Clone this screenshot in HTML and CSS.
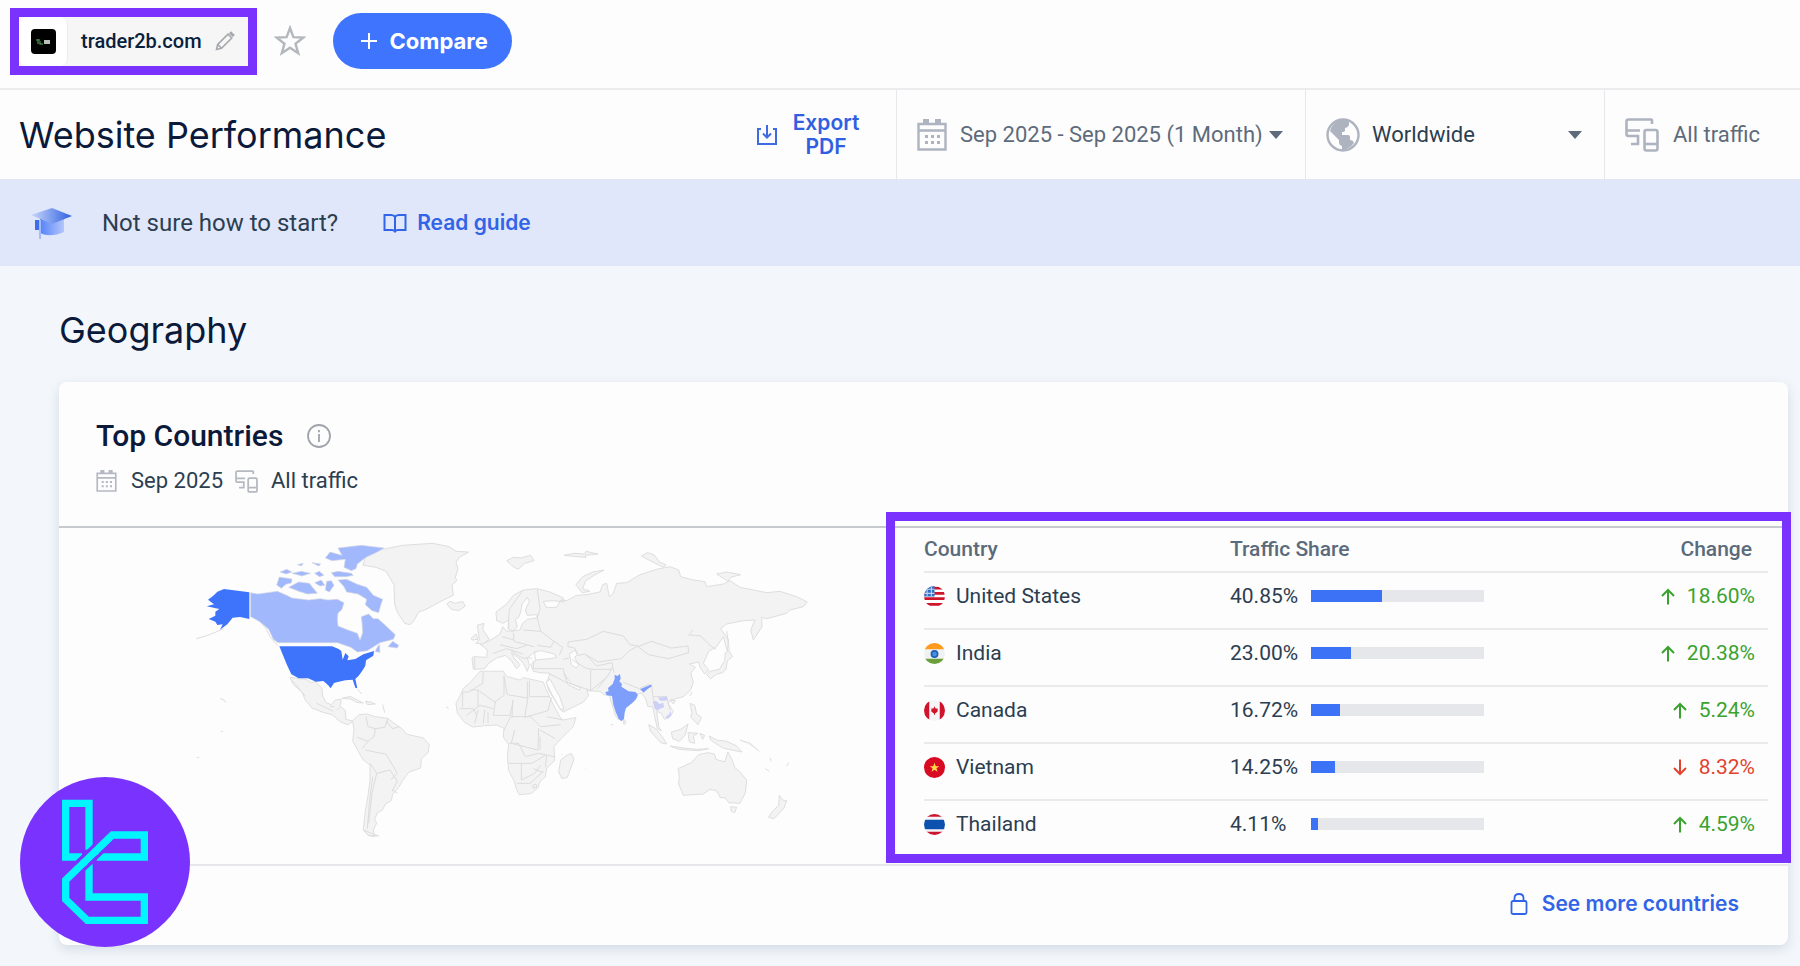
FILE: index.html
```html
<!DOCTYPE html>
<html lang="en">
<head>
<meta charset="utf-8">
<title>Website Performance - trader2b.com</title>
<link rel="stylesheet" href="styles.css">
</head>
<body>
<svg class="defs" aria-hidden="true">
  <symbol id="calendar" viewBox="0 0 30 32">
    <g fill="none" stroke="currentColor" stroke-width="2.400"><path d="M1.500 5h27v25.500h-27zM1.500 11.500h27"/><path d="M6 2.500h6M18 2.500h6" stroke-width="5"/></g>
    <path fill="currentColor" d="M8 16h3v3H8zM14 16h3v3h-3zM20 16h3v3h-3zM8 22h3v3H8zM14 22h3v3h-3zM20 22h3v3h-3z"/>
  </symbol>
  <symbol id="devices" viewBox="0 0 34 34">
    <g fill="none" stroke="currentColor" stroke-width="2.600"><path d="M27 6V2.500Q27 1.500 26 1.500H3.500Q1.500 1.500 1.500 3.500V16Q1.500 18 3.500 18H13V26M1.500 12.500H15M6 26H14.200"/><rect x="19.500" y="12" width="13" height="20.500" rx="2"/><path d="M19.500 26h13"/></g>
  </symbol>
  <symbol id="up" viewBox="0 0 14 17"><path d="M7 16.500V2M1 8l6-6 6 6" fill="none" stroke="currentColor" stroke-width="2"/></symbol>
  <symbol id="down" viewBox="0 0 14 17"><path d="M7 .5V15M1 9l6 6 6-6" fill="none" stroke="currentColor" stroke-width="2"/></symbol>
</svg>

<header class="topbar">
  <button class="site" type="button">
    <span class="site-logo"><svg width="25" height="25" viewBox="0 0 25 25"><rect width="25" height="25" rx="4" fill="#000"/><path d="M5 11h4M7 10v5M9 12v3h3" stroke="#3f7a3f" stroke-width="1.500" fill="none"/><path d="M13 11h6v4h-6z" fill="#b9c4b9"/></svg></span>
    <span class="site-name">trader2b.com</span>
    <svg width="20" height="20" viewBox="0 0 20 20" fill="none" stroke="#a5a8ad" stroke-width="1.600"><path d="M1.500 18.500l1.200-5L13 3.200l3.800 3.800L6.500 17.300zM2.700 13.500l3.800 3.800"/><path d="M15 1.200l3.800 3.800" stroke-width="3"/></svg>
  </button>
  <button class="star" type="button" aria-label="Add to favourites"><svg width="32" height="32" viewBox="0 0 32 32"><path d="M16 3l3.400 9.200 9.800.4-7.700 6.100 2.700 9.500-8.200-5.500-8.200 5.500 2.700-9.500-7.700-6.100 9.800-.4z" fill="none" stroke="#b4b7bc" stroke-width="2.400"/></svg></button>
  <button class="compare" type="button"><svg width="16" height="16" viewBox="0 0 16 16"><path d="M8 0v16M0 8h16" stroke="#fff" stroke-width="2"/></svg>Compare</button>
</header>

<div class="filters">
  <h1>Website Performance</h1>
  <button class="export" type="button">
    <svg width="22" height="22" viewBox="0 0 22 22" fill="none" stroke="#3e6be0" stroke-width="2"><path d="M5 5H2v15h18V5h-3M11 1v12M7 9.500l4 4 4-4"/></svg>
    <span>Export PDF</span>
  </button>
  <label class="filter date">
    <svg width="30" height="32"><use href="#calendar"/></svg>
    <select aria-label="Date range"><option>Sep 2025 - Sep 2025 (1 Month)</option></select>
    <svg class="caret" width="14" height="8" viewBox="0 0 14 8"><path d="M0 0h14L7 8z"/></svg>
  </label>
  <label class="filter region">
    <svg width="34" height="34" viewBox="0 0 34 34"><circle cx="17" cy="17" r="15.500" fill="#fdfdfe" stroke="#adb3bf" stroke-width="2.400"/><path fill="#adb3bf" d="M12 2.500Q18 0 23 3v3q0 3-4 4v2q0 2-3 2v3h6q2 0 2 2v3q3 0 4 3Q23 32 16 32v-4q-3-1-3-4v-2L4 13Q6 6 12 2.500z"/></svg>
    <select aria-label="Country"><option>Worldwide</option></select>
    <svg class="caret" width="14" height="8" viewBox="0 0 14 8"><path d="M0 0h14L7 8z"/></svg>
  </label>
  <div class="filter traffic"><svg width="34" height="34"><use href="#devices"/></svg><span>All traffic</span></div>
</div>

<div class="banner">
  <svg width="42" height="32" viewBox="0 0 42 32">
    <defs><linearGradient id="cap"><stop offset="0" stop-color="#c9d6fb"/><stop offset="1" stop-color="#2f62e0"/></linearGradient><linearGradient id="base"><stop offset="0" stop-color="#5583f8"/><stop offset="1" stop-color="#b3c6fb"/></linearGradient></defs>
    <path d="M9 12v14q10 5 24-1V12z" fill="url(#base)"/><path d="M0 8L21 1l20 8-20 8z" fill="url(#cap)"/><path d="M6 13v10" stroke="#3d6deb" stroke-width="4"/><path d="M9 13v19" stroke="#a5bcf8" stroke-width="2"/>
  </svg>
  <span>Not sure how to start?</span>
  <a class="link guide" href="#guide"><svg width="24" height="20" viewBox="0 0 24 20" fill="none" stroke="currentColor" stroke-width="2"><path d="M12 4Q11 2 8 2H1.500v15H9q2 0 3 1.500Q13 17 15 17h7.500V2H16q-3 0-4 2zv14"/></svg>Read guide</a>
</div>

<main>
  <h2>Geography</h2>
  <section class="card">
    <div class="card-head">
      <h3>Top Countries <svg width="24" height="24" viewBox="0 0 24 24" fill="none" stroke="#a0a4aa" stroke-width="1.800"><circle cx="12" cy="12" r="11"/><path d="M12 10v8M12 6v2.200"/></svg></h3>
      <p><svg width="21" height="22"><use href="#calendar"/></svg><span>Sep 2025</span><svg class="dev" width="23" height="23"><use href="#devices"/></svg><span>All traffic</span></p>
    </div>
    <div class="card-body">
      <div class="map">
        <svg viewBox="-363 -6 2481 1008" role="img" aria-label="Traffic by country on a world map">
          <g class="land">
            <path d="M548 105l10-25 40-20 70-14 90-6 50 10 20 14 38 2-28 16-10 14 6 20-8 26 4 10-14 14 4 30-22 10-60 32-22 8-14 26-12 12-16-4-20-30-10-26-2-60-24-40-30-12z"/>
            <path d="M800 222l10-8 16 6 22-6 8 14-20 14-22-4z"/>
            <path d="M330 442l48 6 16 10 12-4 20 22 2 22 10 20 16 6 12-14 18-2-4 20 16 14 2 26 22 6-16 10-22-8-26-22-30-8-30-12-20-24-10-24-26-22z"/>
            <path d="M334 450l14 14 16 20 12 14M410 520l50 24M450 530h14M470 540l10-8" fill="none"/>
            <path d="M486 505l24-6 28 14 12 6-20-2-18-10zM556 514l16 2 14 6-24 2zM532 478l14 14M608 524l6 24"/>
            <path transform="translate(0 46) scale(1 .92)" d="M518 572l20-20 24-2 20 8 40 6 20 16 24 18 14 18 50 12 18 22-4 26-20 20-2 30-36 14-20 30-10 20-18 22-4 20-18 12-8 18-16 10-8 22 6 12-10 22 4 22-20-4-14-20 6-60 8-50 6-50 0-50-20-16-16-30-16-32 4-36z"/>
            <path d="M550 900l20 8 26 10-30-2z"/>
            <path class="borders" d="M558 560l6 30 22 6 28-4 10-26M586 596l-4 24-18 14-32-12M564 634l-18 22M556 660l28 6 34 6 20 34 14 24-20 20M570 700l20 30 40-10 22 34-16 30M578 740l-10 80-6 76M590 730l-14 60-10 90M618 572l20 24 20-6M638 780l14 10"/>
            <path d="M120 506l12 4 6 8M122 604h6M50 682h8M798 530l8 6" fill="none"/>
            <path d="M48 326l30-8 30-12 22-10" fill="none"/>
            <path d="M228 268l14 8 16 20 12 24 22 26" fill="none"/>
          </g>
          <g class="us">
            <path d="M132 177l76 10v80l-28-6-22 2-16 20-22 16 8-16-16 2-6-10-20-8 20-10v-12l12-8-38-8 22-6-18-14 16-12 12-12z"/>
            <path d="M298 349h158l20 8 8 6 4 26 8-20 10 10-4 12 24-4 24-14 32-10-2 14-22 14-2 16-8 14-12 16-10 10 6 28-6-2-8-24-22 2-26 6-8 2-10 16-8-10-14-12-22 2-24-10-28 0-22-12-14-30z"/>
          </g>
          <g class="ca">
            <path d="M212 188l20 4 30-4 30-4 28 12 16 8 50 6 34-4 24 4 28-2 20 10-6 20-12 12-2 16 2 22 30 12 28 10 8 20 8-22-2-30-2-18 22-8 14 14 14 0 20 18 32 30-6 14-40 10-38 24-30 4-20-14-40-14H294l-14-10-14-30-28-24-26-14z"/>
            <path d="M436 84l14-18 36 10-12-22 70-8 68 8-20 12-34 16-26 20-4 14-14 6-22-10 4-24-40 4zM290 165l8-24 38 6-2 12-16 4-14 12zM326 172l30-16 32 4 16 20 8 10-30 2-26-8zM454 128l20-4 40 6 6 6-22 4h-34zM474 150l26-2 30 14 30 10 20 24 28 12-6 18-6 22-20-6-20-18 4-16-26-16-34-6-8-16zM300 126l20-8 16 8-18 6zM336 130l28-6 28 6-26 8zM396 98l26 4-6 6zM404 130l14-6 14 12-14 4zM404 158l20-8 10 16-14 2zM440 154l14-2 8 14-14 20-12-6zM352 104l18-4-6 8zM590 355l8-12 2 24-14-2zM624 350l14-16 18 12-4 8z"/>
          </g>
          <g transform="translate(780 0)">
            <g class="land">
              <path d="M200 92l20-10 22 2 30-8 10 16-28 8-20 18-14-8zM372 76l30-6 32 2 4-8 36 8-38 4 2 6-28-2zM604 78l18-10 20 6 16 22 20 8-8 8-28-14zM830 132l30-6 42 8-30 8-8 12zM408 164l20-24 30-14 34-6-30 16-26 18-8 22 22 8-24 4z"/>
              <path d="M168 246L200 222 220 196 250 180 290 176 330 186 370 204 372 216 340 212 310 214 318 232 350 232 362 210 380 212 410 196 440 194 480 186 488 164 500 160 508 200 520 190 530 160 560 158 600 134 650 118 690 110 716 120 722 140 760 150 795 155 800 170 850 162 870 152 900 172 980 188 1020 184 1070 200 1102 216 1090 230 1050 240 1040 250 980 266 965 262 966 290 940 330 932 300 945 270 910 272 860 282 842 296 866 330 862 362 858 350 850 320 830 350 806 364 790 400 806 420 794 432 780 412 776 396 748 402 766 412 752 430 760 456 752 480 730 500 700 508 690 512 684 520 700 545 690 560 674 568 662 548 650 545 656 590 664 602 652 596 644 560 638 530 624 530 616 504 604 490 590 492 560 518 550 536 546 560 536 570 526 556 512 510 508 496 492 494 480 484 440 482 446 496 430 516 370 546 362 540 326 480 320 460 330 430 300 428 280 424 272 404 290 390 286 364 262 384 268 404 262 424 250 400 240 388 214 368 222 384 240 404 230 416 214 392 196 376 170 384 146 400 134 416 100 418 96 384 100 380 140 382 142 360 120 342 146 334 180 312 188 290 200 304 240 300 248 280 262 268 290 264 292 254 262 256 256 240 268 214 262 202 246 222 242 246 236 262 226 268 232 290 218 306 206 296 206 270 190 280 170 272z"/>
              <path transform="translate(0 21) scale(1 .95)" d="M120 424h70l10 16 40 12 10-8 60 14 8 22 22 50 22 42 8 6 38-8-8 28-38 40-20 24 2 44-24 24-4 28-16 14-6 20-20 18-36 4-8-16-8-28-16-32-4-44 4-38-16-24 2-28-22-10-36 2-36 4-24-14-22-30-4-30 12-24 10-24 22-20z"/>
              <path d="M362 690l18-14 14-6 8 18-20 54-16 4-10-20zM108 312l-14 12 2 6 18-2zM112 286l20-6-4 18 20 30-20 14-20-2 10-12z"/>
              <path d="M626 584l24 14 22 30 8 14-18-4-30-34zM690 648l40 6 40 4 36-2-30 6-60-4zM694 606l28-8 22-16-8 32-18 20-20-8zM744 608l30 2-14 8 4 22-16-4zM750 520l14 6 6 26 14 10-10 22-22-22 4-14zM808 618l22 12 30 4 30 14 16 18-40-8-18-4-36-24zM780 610l14 6-6 12zM900 630l30 10 28 24M550 566l8 10-6 8zM756 486l-6 12M860 302l8 60M690 510l16 2-6 10z"/>
              <path d="M800 434l10-10 28-6 16-26 2-24 10-6 12 18-16 12-4 26-10 10-18 4-18 14z"/>
              <path d="M718 738l-2 24 14 34 60-4 20-14 20 4 10 20 16 2 10 14 34 2 16-32 4-38-22-26-14-12-8-24-12-22-10 30-26-8-4-16-20-4-28 6-22 24-40 18zM872 830l18 2-6 16-10-4zM1018 796l10 14 12 2-8 22-30 32-16-4 10-16 20-20zM990 684l4 10M976 716l12 8M1040 708l6-10"/>
              <path d="M436 716v2M512 584h8M366 672v2" fill="none"/>
            </g>
            <g class="water">
              <path d="M284 366l20-4 40 10 6 10-20 4-44 4zM388 372l18-12 6 14-8 8 12 24-8 8-14-10z"/>
              <path d="M318 456l12-8 30 54 12 38-12-4-24-42zM372 430l20 30 30 14-4 6-34-16z"/>
            </g>
            <path class="borders" d="M204 298l4-60 40-56M292 178l8 60-8 26M292 264l10 40 40 30-10 18-40-6M250 300l52 4M220 310l2 24 60 16M186 320l36 10M180 344l50 12 30-10M160 370l40-14 50 16M214 362l32 22 30 0M342 334l26 18-10 24M370 388l16-4M384 336l56-8 50-24 60 14 20 26 24 4-26 14-24 24-70 10-40-24-20 4-10-22-20-4zM594 350l40-16 60 20 50-6 2 20-60 18-60-12zM744 314l38 4 30 30 16 10M750 310l10-10M440 376l30 32 46-10M396 388l40 26 20 4 60 0M368 414l14 44 72 24M452 420l0 62 50-42 16-30M502 440l-30 36M516 398l6 30M280 392v24h86M330 432l50 26M548 456l50 20 30-14M604 482l30-18 6 40 10 30M640 500l40 0 10 40M130 424l-2 36-42 26-18 0v46M90 480l24 0v50M114 480l50 36 28-20v-60M192 440l10 54 60 10v-50M268 452v48h62M264 502l-10 60 70-20 10-40M218 512l-2 50M166 516l-6 40 50 0 10-46M80 556l40-30 40 10M104 580l10-40M130 580l4-40M144 580v-34M60 536l40 0 10 20M192 600l20-40 60 0 30 30 60-6M320 560l50 10M224 600l-10 40 80 20 2-66M206 640h30l20 40 40-10 46 10M300 600l46 26M300 620l0 40M206 700h70l40-24M244 700v50l40-20 18-24M230 760l40 0 40-36M280 716l30 12M278 766l10-4 2 10-10 2zM320 676l-4 36M104 382v34"/>
            <path class="in" d="M524 434l8 4 8-6 2 14-4 8 8 8-2 8 22 14 20 2 8 8-6 14-12 12-18 14-4 14-2 18-8 8-8-8-8-18-8-24-4-26-16-2-4-10 10-2-2-10 14-12 6-16zM600 478l14-6 18-8 4 4-14 10-12 10-4-6z"/>
            <path class="vn" d="M654 502l18 0 8-4 2 12-8 2-14 0zM638 514l12 0 8 8 12-4 2 14-12 4-8 6-8-6zM676 562l12-10 4-10 2 14-10 10z"/>
          </g>
        </svg>
      </div>
      <div class="countries">
        <table>
          <thead><tr><th class="c-name">Country</th><th>Traffic Share</th><th class="c-change">Change</th></tr></thead>
          <tbody>
            <tr><td><span class="cell"><svg class="flag" viewBox="0 0 20 20"><path fill="#fff" d="M0 0h20v20H0z"/><path stroke="#d0142c" stroke-width="2.500" d="M0 2h20M0 7h20M0 12h20M0 17.500h20"/><path fill="#2f6fc4" d="M0 0h10v10H0z"/><path stroke="#bdd7f5" d="M3 0v10M7 0v10M0 3h10M0 7h10"/></svg>United States</span></td><td><span class="cell"><span class="share">40.85%</span><span class="bar"><span style="width:41%"></span></span></span></td><td class="c-change"><span class="up"><svg width="14" height="17"><use href="#up"/></svg>18.60%</span></td></tr>
            <tr><td><span class="cell"><svg class="flag" viewBox="0 0 20 20"><path fill="#f0f1f3" d="M0 0h20v20H0z"/><path fill="#ff9a1f" d="M0 0h20v6H0z"/><path fill="#6a9f3c" d="M0 15h20v5H0z"/><circle cx="10" cy="10.500" r="3" fill="#4a8edb" stroke="#1d5fb4" stroke-width="1.500"/></svg>India</span></td><td><span class="cell"><span class="share">23.00%</span><span class="bar"><span style="width:23%"></span></span></span></td><td class="c-change"><span class="up"><svg width="14" height="17"><use href="#up"/></svg>20.38%</span></td></tr>
            <tr><td><span class="cell"><svg class="flag" viewBox="0 0 20 20"><path fill="#f4f5f7" d="M0 0h20v20H0z"/><path fill="#d0142c" d="M0 0h5v20H0zM15 0h5v20h-5zM10 6l1 2 2 0v3l-2 1.500h-.5V14h-1v-1.500H9L7 11V8h2z"/></svg>Canada</span></td><td><span class="cell"><span class="share">16.72%</span><span class="bar"><span style="width:17%"></span></span></span></td><td class="c-change"><span class="up"><svg width="14" height="17"><use href="#up"/></svg>5.24%</span></td></tr>
            <tr><td><span class="cell"><svg class="flag" viewBox="0 0 20 20"><path fill="#d80a24" d="M0 0h20v20H0z"/><path fill="#ffd84a" d="M10 5.500l1.200 3.200 3.300.1-2.600 2 .9 3.300L10 12.200l-2.800 1.900.9-3.300-2.600-2 3.300-.1z"/></svg>Vietnam</span></td><td><span class="cell"><span class="share">14.25%</span><span class="bar"><span style="width:14%"></span></span></span></td><td class="c-change"><span class="down"><svg width="14" height="17"><use href="#down"/></svg>8.32%</span></td></tr>
            <tr><td><span class="cell"><svg class="flag" viewBox="0 0 20 20"><path fill="#f4f5f7" d="M0 0h20v20H0z"/><path fill="#cc1630" d="M0 0h20v2.500H0zM0 17h20v3H0z"/><path fill="#0a52ad" d="M0 5.500h20v9H0z"/></svg>Thailand</span></td><td><span class="cell"><span class="share">4.11%</span><span class="bar"><span style="width:4%"></span></span></span></td><td class="c-change"><span class="up"><svg width="14" height="17"><use href="#up"/></svg>4.59%</span></td></tr>
          </tbody>
        </table>
      </div>
    </div>
    <footer class="card-foot"><a class="link" href="#countries"><svg width="18" height="22" viewBox="0 0 18 22" fill="none" stroke="currentColor" stroke-width="1.800"><rect x="1.500" y="8" width="15" height="13" rx="1.500"/><path d="M4.500 8V5q0-4 4.500-4t4.500 4v3"/></svg>See more countries</a></footer>
  </section>
</main>

<svg class="badge" viewBox="60 48 510 510" aria-hidden="true">
  <circle cx="315" cy="303" r="255" fill="#7a33ff"/>
  <path fill="none" stroke="#00f6ff" stroke-width="22" d="M267 266V127H197V288H246M290 288H433V222H337L197 357V415L262 478H433V408H267V310"/>
  <path fill="none" stroke="#7a33ff" stroke-width="9" d="M225 308l60-58M240 338l72-69"/>
</svg>
</body>
</html>
```
FILE: styles.css
```css
* { box-sizing: border-box; }
body { margin: 0; background: #f3f7fb; color: #2c3e50; font: 22px/28px Roboto, sans-serif; position: relative; }
h1, h2, h3, p { margin: 0; }
svg { flex: none; display: block; }
button, select { font: inherit; color: inherit; border: 0; background: none; padding: 0; cursor: pointer; }
.defs { position: absolute; width: 0; height: 0; }

.topbar { display: flex; align-items: center; min-height: 90px; padding: 0 10px 6px; background: #fdfdfe; border-bottom: 2px solid #ececee; }
.site { display: flex; align-items: center; height: 67px; border: 9px solid #7a33ff; background: #f6f6f7; padding-right: 13px; }
.site-logo { display: flex; align-items: center; justify-content: center; width: 49px; height: 49px; border-radius: 8px; background: #fff; border-right: 1px solid #ececee; }
.site-name { margin: 0 13px; font-size: 20px; font-weight: 500; color: #0a1f3c; }
.star { margin: 0 27px 0 17px; }
.compare { display: flex; align-items: center; gap: 13px; height: 56px; padding: 0 24px 0 28px; border-radius: 28px; background: #3e74fe; color: #fff; font: 700 22px/28px Inter, sans-serif; }

.filters { display: flex; align-items: stretch; min-height: 90px; background: #fdfdfe; border-bottom: 1px solid #e3e6ee; color: #5e6b7a; }
h1 { flex: 1; align-self: center; padding-left: 19px; font: 400 36px/44px Inter, sans-serif; color: #0b1a3a; }
.export { display: flex; align-items: center; gap: 13px; padding-right: 35px; color: #3060e0; font: 600 21px/24px Inter, sans-serif; }
.export span { width: 70px; }
.filter { display: flex; align-items: center; border-left: 1px solid #e6e8ec; }
.filter > svg:first-child { color: #adb3bf; }
.filter select { appearance: none; outline: 0; }
.caret { fill: #5e6b7a; }
.date { gap: 6px; padding: 0 22px 0 20px; }
.date select { padding-left: 7px; }
.region { gap: 12px; width: 299px; padding: 0 22px 0 20px; }
.region select { flex: 1; color: #2c3e50; }
.traffic { gap: 14px; width: 196px; padding-left: 20px; }

.banner { display: flex; align-items: center; min-height: 86px; padding-left: 31px; background: #e1e7fa; font-size: 24px; }
.banner span { margin: 0 45px 0 29px; }
.link { display: flex; align-items: center; gap: 14px; color: #3164e6; font: 600 21px/28px Inter, sans-serif; text-decoration: none; }
.guide { gap: 10px; }

main { padding: 40px 12px 22px 59px; }
h2 { font: 400 36px/48px Inter, sans-serif; color: #0b1a3a; }
.card { margin-top: 28px; background: #fdfdfe; border-radius: 8px; box-shadow: 0 4px 12px #d3dae4; }
.card-head { padding: 35px 37px 31px; border-bottom: 2px solid #c6c9cd; }
h3 { display: flex; align-items: center; gap: 24px; font-size: 30px; line-height: 38px; font-weight: 500; color: #0b1a3a; }
.card-head p { display: flex; align-items: center; margin-top: 12px; gap: 14px; }
.card-head p svg { color: #b4b9c1; }
.dev { margin: 0 -1px 0 -2px; }
.card-body { display: grid; grid-template-columns: 827fr 902fr; border-bottom: 2px solid #e6e7ea; }
.map svg { width: 100%; height: auto; }
.land path { fill: #f3f3f4; stroke: #dededf; stroke-width: 3; stroke-linejoin: round; }
.land path[fill="none"] { fill: none; }
.borders, .land .borders { fill: none; stroke: #dcdcde; stroke-width: 3; stroke-linejoin: round; }
.water { fill: #fdfdfe; stroke: #dededf; stroke-width: 3; }
.us { fill: #3e74fb; }
.ca { fill: #a1b8fc; stroke: #d5d7e2; stroke-width: 2; }
.in { fill: #7d9ffb; }
.vn { fill: #ccd0f6; }

.countries { position: relative; padding: 0 20px 0 38px; }
.countries::after { content: ""; position: absolute; inset: -16px -3px 1px 0; border: 9px solid #7a33ff; pointer-events: none; }
table { width: 100%; border-collapse: separate; border-spacing: 0; table-layout: fixed; font-size: 21px; }
th { padding: 7px 0 8px; text-align: left; font-weight: 500; color: #5b6b7b; border-bottom: 2px solid #e9eaec; }
td { padding: 9px 0 18px; border-bottom: 2px solid #e9eaec; }
tr:last-child td { border-bottom: 0; }
.c-name { width: 306px; }
.c-change { width: 180px; padding-right: 13px; text-align: right; }
th.c-change { padding-right: 16px; }
.cell { display: flex; align-items: center; }
.flag { width: 21px; height: 21px; margin-right: 11px; border-radius: 50%; }
.share { width: 81px; }
.bar { width: 173px; height: 12px; background: #e5e7ea; }
.bar span { display: block; height: 100%; background: #3b72f6; }
.up, .down { display: flex; justify-content: flex-end; align-items: center; gap: 12px; color: #3aa22f; }
.down { color: #e0442e; }
.card-foot { display: flex; justify-content: flex-end; padding: 24px 49px 27px; }
.badge { position: absolute; left: 20px; bottom: 20px; width: 170px; height: 170px; }
```
